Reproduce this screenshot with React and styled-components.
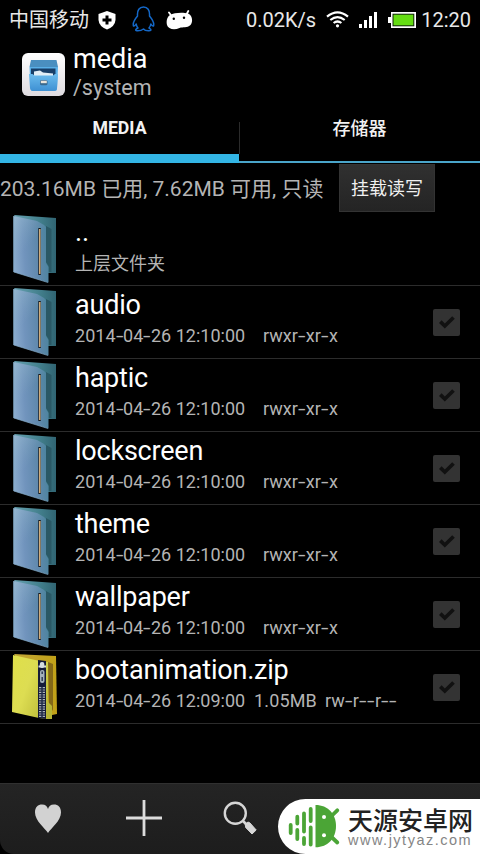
import React from "react";
import styled, { createGlobalStyle } from "styled-components";

const Global = createGlobalStyle`
  * { box-sizing: border-box; }
  body { margin: 0; background: #000; }
`;

const Screen = styled.div`
  position: relative;
  width: 480px;
  height: 854px;
  overflow: hidden;
  display: flex;
  flex-direction: column;
  background: #000;
  color: #fff;
  font-family: Roboto, "Noto Sans CJK SC", sans-serif;
  svg { display: block; flex: none; }
`;

const StatusBar = styled.header`
  height: 38px;
  flex: none;
  display: flex;
  align-items: center;
  justify-content: space-between;
  padding: 2px 9px 0 9px;
  color: #e8e8e8;
`;

const StatusGroup = styled.div`
  display: flex;
  align-items: center;
`;

const StatusText = styled.span`
  font-size: 20px;
  line-height: 36px;
  white-space: nowrap;
`;

const StatusIcon = styled.span`
  margin-left: ${(p) => p.$gap}px;
  padding-bottom: ${(p) => p.$lift || 0}px;
`;

const TitleBar = styled.div`
  height: 72px;
  flex: none;
  display: flex;
  padding: 6px 0 0 22px;
`;

const AppIcon = styled.div`
  margin: 9px 9px 0 0;
  width: 42px;
  height: 43px;
`;

const Title = styled.h1`
  margin: 0;
  font-size: 27px;
  line-height: 30px;
  font-weight: 400;
`;

const Path = styled.div`
  font-size: 21.5px;
  line-height: 27px;
  color: #b4b4b4;
`;

const Tabs = styled.nav`
  height: 53px;
  flex: none;
  display: grid;
  grid-template-columns: 239px 241px;
`;

const Tab = styled.div`
  display: flex;
  justify-content: center;
  font-size: ${(p) => (p.$active ? 17.7 : 18)}px;
  font-weight: ${(p) => (p.$active ? 700 : 500)};
  line-height: ${(p) => (p.$active ? 36 : 38)}px;
  color: #f2f2f2;
  border-bottom: ${(p) => (p.$active ? "9px" : "2px")} solid ${(p) => (p.$active ? "#33b5e5" : "#4aa5ca")};
  ${(p) => !p.$active && `
    background: linear-gradient(#2b2b2b, #2b2b2b) 0 12px / 1px 32px no-repeat;
  `}
`;

const Info = styled.section`
  height: 50px;
  flex: none;
  display: flex;
  align-items: flex-start;
  justify-content: space-between;
  padding: 1px 45px 0 0;
`;

const InfoText = styled.span`
  font-size: 21px;
  line-height: 50px;
  color: #b4b4b4;
  white-space: nowrap;
`;

const MountButton = styled.button`
  width: 96px;
  height: 48px;
  padding: 1px 0 0;
  border: 1px solid #333;
  background: linear-gradient(#303030, #242424);
  color: #f0f0f0;
  font: 18px/46px Roboto, "Noto Sans CJK SC", sans-serif;
`;

const List = styled.ul`
  margin: 0;
  padding: 0;
  list-style: none;
  flex: 1;
`;

const Row = styled.li`
  height: 73px;
  display: flex;
  border-bottom: 1px solid #2c2c2c;
  padding-right: 20px;
`;

const FileIcon = styled.div`
  width: 75px;
  padding: 2px 0 0 9px;
`;

const Details = styled.div`
  flex: 1;
  padding-top: 3px;
`;

const Name = styled.div`
  font-size: 27px;
  line-height: 32px;
  letter-spacing: -0.22px;
  white-space: nowrap;
`;

const Meta = styled.div`
  display: flex;
  padding-top: ${(p) => (p.$parent ? 2 : 1)}px;
  font-size: 18px;
  line-height: 28px;
  color: #b4b4b4;
  white-space: pre;
`;

const Stamp = styled.span`
  width: 170px;
`;

const Size = styled.span`
  width: 62px;
  margin-left: 9px;
  letter-spacing: 0.15px;
`;

const Permissions = styled.span`
  margin-left: ${(p) => p.$gap}px;
`;

const Hyphen = styled.span`
  display: inline-block;
  width: ${(p) => p.$width}px;
  transform: scaleX(1.5);
  transform-origin: left;
`;

const Check = styled.div`
  width: 27px;
  height: 27px;
  margin-top: 23px;
  border-radius: 2px;
  background: #333;
`;

const Toolbar = styled.footer`
  height: 71px;
  flex: none;
  display: grid;
  grid-template-columns: repeat(5, 96px);
  border-top: 1px solid #303030;
  border-bottom-left-radius: 14px;
  background: linear-gradient(#242424, #1d1d1d);
`;

const Tool = styled.div`
  display: flex;
  justify-content: center;
  padding-top: 12px;
`;

const Watermark = styled.aside`
  position: absolute;
  right: 0;
  bottom: 0;
  width: 202px;
  height: 55px;
  display: flex;
  padding-left: 10px;
  border-radius: 28px 0 0 28px;
  background: #fff;
`;

const Brand = styled.div`
  padding: 8px 0 0 8px;
  color: #222;
`;

const BrandName = styled.div`
  font: 500 25px/25px "Noto Sans CJK SC", sans-serif;
  white-space: nowrap;
`;

const BrandUrl = styled.div`
  font: 14.5px/16px "Liberation Sans", sans-serif;
  letter-spacing: 1.5px;
  color: #858585;
  white-space: nowrap;
`;

const Shield = () => (
  <svg width="18" height="19" viewBox="0 0 18 19">
    <path d="M9 0 L17.5 3 V9 Q17 15.5 9 18.5 Q1 15.5 .5 9 V3Z" fill="#fff" />
    <path d="M9 4.5V13.5M4.5 9H13.5" stroke="#000" strokeWidth="3" />
  </svg>
);

const Penguin = () => (
  <svg width="24" height="26" viewBox="0 0 24 26" fill="none" stroke="#1468c8" strokeWidth="1.5" strokeLinejoin="round">
    <path d="M5.5 10C5 4 7.5 1 11.5 1S18 4 17.5 10C20 13 22.5 17 21.5 20C20.5 20.5 19.5 19 18.8 18C18.5 20 17.8 21 17 22Q21 24.5 17 24.8Q13 25 11.5 23Q9 25 5 24.8Q2 24 6 22C5 21 4.5 20 4.2 18C3.5 19 2.5 20.5 1.5 20C.5 17 3 13 5.5 10Z" />
  </svg>
);

const Droid = () => (
  <svg width="27" height="20" viewBox="0 0 27 20">
    <path d="M5.5 6 3 2.5M20.5 4.5 22.3 1" stroke="#fff" strokeWidth="1.8" strokeLinecap="round" />
    <path d="M4 5C8 2.5 17 2 22 3.5C26 5 27.5 11 24.5 15C21 18.5 17 16.5 13.5 18C8 20.5 2 19 1 15C0 11 1 7 4 5Z" fill="#fff" />
    <circle cx="7.8" cy="8.8" r="1.2" fill="#000" />
    <circle cx="18" cy="7.8" r="1.2" fill="#000" />
  </svg>
);

const Wifi = () => (
  <svg width="23" height="17" viewBox="0 0 23 17" fill="none" stroke="#fff" strokeWidth="2.2">
    <path d="M1 5.6Q11.5-3 22 5.6M4.3 9Q11.5 3.2 18.7 9M7.6 12Q11.5 9 15.4 12" />
    <circle cx="11.5" cy="14.8" r="1.6" fill="#fff" stroke="none" />
  </svg>
);

const Signal = () => (
  <svg width="18" height="16" viewBox="0 0 18 16" fill="#fff">
    <path d="M0 12h3v4H0zM5 8h3v8H5zM10 4h3v12h-3zM15 0h3v16h-3z" />
  </svg>
);

const Battery = () => (
  <svg width="28" height="16" viewBox="0 0 28 16">
    <path d="M3 0H28V16H3V11H0V5H3Z" fill="#fff" />
    <path d="M4.5 1.7H26.3V14.3H4.5Z" fill="#10230a" />
    <path d="M5.5 2.7H25.3V13.3H5.5Z" fill="#64dc12" />
  </svg>
);

const Cabinet = () => (
  <svg width="43" height="43" viewBox="0 0 43 43">
    <defs>
      <linearGradient id="tile" x2="0" y2="1"><stop stopColor="#fff" /><stop offset="1" stopColor="#dedbe0" /></linearGradient>
      <linearGradient id="drawer" x2="0" y2="1"><stop stopColor="#6bbced" /><stop offset="1" stopColor="#3e90d3" /></linearGradient>
    </defs>
    <rect width="43" height="43" rx="6" fill="url(#tile)" />
    <path d="M9 7H34.5L36 14H7.5Z" fill="#4a8fc0" />
    <path d="M7.5 14H36L35 36Q35 38 32.5 38H11Q8.7 38 8.5 36Z" fill="#5ab0e8" />
    <path d="M9 15.5H33.5V23H9Z" fill="#183f68" />
    <path d="M12 18.5 18 17.5 21 19.5 31 20.5V23H12Z" fill="#e1eef6" />
    <path d="M7 21H10.5L12.5 22.5H31L33 21H36L35 35Q35 38 32 38H11Q8.5 38 8 35Z" fill="url(#drawer)" />
    <rect x="18" y="27" width="7.5" height="5.2" rx="1.5" fill="#39688d" />
    <path d="M18.8 27.7H24.8V30.2H18.8Z" fill="#e9e5dc" />
  </svg>
);

const Folder = () => (
  <svg width="52" height="70" viewBox="0 0 52 70">
    <defs>
      <linearGradient id="folderFront" x1="0" y1=".55" x2="1" y2=".4">
        <stop stopColor="#8aabce" /><stop offset=".3" stopColor="#7194bd" /><stop offset=".65" stopColor="#6089ad" /><stop offset="1" stopColor="#4b839d" />
      </linearGradient>
      <linearGradient id="folderBack"><stop stopColor="#67a2b1" /><stop offset=".6" stopColor="#43808d" /><stop offset="1" stopColor="#306472" /></linearGradient>
      <linearGradient id="folderShine" x1="0" y1="0" x2=".6" y2="1"><stop stopColor="#a8cbd8" stopOpacity=".5" /><stop offset=".6" stopColor="#8fb3c8" stopOpacity="0" /></linearGradient>
    </defs>
    <path d="M5 0 47 3V58H37Z" fill="url(#folderBack)" />
    <path d="M37 11 42.5 14V57H39.5V51L37 47Z" fill="#2a5865" />
    <path d="M4.5 1 28 6 35 10 37 12V48L39.5 52V67.5L4.5 57Z" fill="url(#folderFront)" />
    <path d="M4.5 1 28 6 35 10 37 12V48L4.5 57Z" fill="url(#folderShine)" />
    <path d="M4.8 1V57L39 67.5" fill="none" stroke="#84acc8" strokeWidth=".7" />
    <path d="M29.3 13H31.8V60H29.3Z" fill="#171b20" />
    <path d="M30.8 14V59" stroke="#e3bd87" strokeWidth="1.4" />
  </svg>
);

const ZipFolder = () => (
  <svg width="52" height="70" viewBox="0 0 52 70">
    <defs>
      <linearGradient id="zipFront" x1="0" y1=".2" x2="1" y2=".8"><stop stopColor="#dfdf4b" /><stop offset=".4" stopColor="#dddd52" /><stop offset="1" stopColor="#b6b534" /></linearGradient>
      <linearGradient id="zipBack"><stop stopColor="#c1a638" /><stop offset="1" stopColor="#c1a117" /></linearGradient>
    </defs>
    <path d="M5 1 47 3 48 61 43 62Z" fill="url(#zipBack)" />
    <path d="M39 9 44 11V58L40 51Z" fill="#836818" />
    <path d="M4 2 35 9H39V49L43 53V66H37L30 65 3 59Z" fill="url(#zipFront)" />
    <path d="M29 7 37 8V66L29 65Z" fill="#151b38" />
    <path d="M33 34V65" stroke="#adb6bd" strokeWidth="6" strokeDasharray="1.2 1.2" />
    <path d="M33 34V65" stroke="#202c48" strokeWidth="1.5" />
    <rect x="30.8" y="9" width="4.5" height="6" rx="2" fill="#d6dde0" />
    <path d="M29.5 13.5H37" stroke="#d6dde0" strokeWidth="2" />
    <rect x="31" y="17" width="4.5" height="13" rx="2" fill="#a4b1ba" />
    <path d="M33.2 18.5V21M33.2 24V28" stroke="#313f55" strokeWidth="1.5" />
  </svg>
);

const Tick = () => (
  <svg width="27" height="27" viewBox="0 0 27 27">
    <path d="M7.3 12.7 11.8 17 20.5 8.5" fill="none" stroke="#111" strokeWidth="3.7" />
  </svg>
);

const Heart = () => (
  <svg width="30" height="44" viewBox="0 0 30 44">
    <path d="M15 37C12 32 2 25 2 16.5C2 11 5 8.5 9 8.5C12.5 8.5 14.3 10.3 15 13C15.7 10.3 17.5 8.5 21 8.5C25 8.5 28 11 28 16.5C28 25 18 32 15 37Z" fill="#d2d2d2" />
  </svg>
);

const Plus = () => (
  <svg width="36" height="44" viewBox="0 0 36 44">
    <path d="M18 4V40M0 22H36" stroke="#dcdcdc" strokeWidth="2.8" />
  </svg>
);

const Search = () => (
  <svg width="36" height="44" viewBox="0 0 36 44">
    <circle cx="13.3" cy="17.3" r="10.5" fill="none" stroke="#d6d6d6" strokeWidth="2.4" />
    <path d="M20.5 24.5 25 29" stroke="#d6d6d6" strokeWidth="2.6" />
    <path d="M23.2 28.2 26 26 28 27 34.2 34 30 38 23.7 31.5Z" fill="#d6d6d6" stroke="#d6d6d6" strokeLinejoin="round" />
  </svg>
);

const Mascot = () => (
  <svg width="52" height="55" viewBox="0 0 52 55">
    <path d="M27.5 6V48.3C40 48.3 48 39 48 27S40 6 27.5 6Z" fill="#4ba536" />
    <path d="M43.5 17 49.3 11.3M43.5 38 49.3 43.5M2.7 26V34M9.3 17.7V24.5M9.3 31V40M16 14.5V32.5M16 39V45M22.7 10V22M22.7 28.5V45.5" stroke="#4ba536" strokeWidth="3.8" strokeLinecap="round" />
    <circle cx="36" cy="18" r="2" fill="#fff" />
    <circle cx="36" cy="36.3" r="2" fill="#fff" />
  </svg>
);

const files = [
  { name: "audio" },
  { name: "haptic" },
  { name: "lockscreen" },
  { name: "theme" },
  { name: "wallpaper" },
  { name: "bootanimation.zip", zip: true, date: "2014-04-26 12:09:00", size: "1.05MB", mode: "rw-r--r--" },
];

// Widens every hyphen so dates and permission strings keep an even rhythm.
const Dashed = ({ text, width }) =>
  [...text].map((c, i) => (c === "-" ? <Hyphen key={i} $width={width}>-</Hyphen> : c));

const FileRow = ({ name, zip, date = "2014-04-26 12:10:00", size, mode = "rwxr-xr-x" }) => (
  <Row>
    <FileIcon>{zip ? <ZipFolder /> : <Folder />}</FileIcon>
    <Details>
      <Name>{name}</Name>
      <Meta>
        <Stamp><Dashed text={date} width={7.6} /></Stamp>
        {size && <Size>{size}</Size>}
        <Permissions $gap={size ? 9 : 18}><Dashed text={mode} width={8} /></Permissions>
      </Meta>
    </Details>
    <Check><Tick /></Check>
  </Row>
);

export default function App() {
  return (
    <Screen>
      <Global />
      <StatusBar>
        <StatusGroup>
          <StatusText>中国移动</StatusText>
          <StatusIcon $gap={9}><Shield /></StatusIcon>
          <StatusIcon $gap={16} $lift={3}><Penguin /></StatusIcon>
          <StatusIcon $gap={10} $lift={1}><Droid /></StatusIcon>
        </StatusGroup>
        <StatusGroup>
          <StatusText>0.02K/s</StatusText>
          <StatusIcon $gap={10} $lift={2}><Wifi /></StatusIcon>
          <StatusIcon $gap={10}><Signal /></StatusIcon>
          <StatusIcon $gap={11}><Battery /></StatusIcon>
          <StatusIcon $gap={5}><StatusText>12:20</StatusText></StatusIcon>
        </StatusGroup>
      </StatusBar>
      <TitleBar>
        <AppIcon><Cabinet /></AppIcon>
        <div>
          <Title>media</Title>
          <Path>/system</Path>
        </div>
      </TitleBar>
      <Tabs>
        <Tab $active>MEDIA</Tab>
        <Tab>存储器</Tab>
      </Tabs>
      <Info>
        <InfoText>203.16MB 已用, 7.62MB 可用, 只读</InfoText>
        <MountButton>挂载读写</MountButton>
      </Info>
      <List>
        <Row>
          <FileIcon><Folder /></FileIcon>
          <Details>
            <Name>..</Name>
            <Meta $parent>上层文件夹</Meta>
          </Details>
        </Row>
        {files.map((f) => <FileRow key={f.name} {...f} />)}
      </List>
      <Toolbar>
        <Tool><Heart /></Tool>
        <Tool><Plus /></Tool>
        <Tool><Search /></Tool>
      </Toolbar>
      <Watermark>
        <Mascot />
        <Brand>
          <BrandName>天源安卓网</BrandName>
          <BrandUrl>www.jytyaz.com</BrandUrl>
        </Brand>
      </Watermark>
    </Screen>
  );
}
